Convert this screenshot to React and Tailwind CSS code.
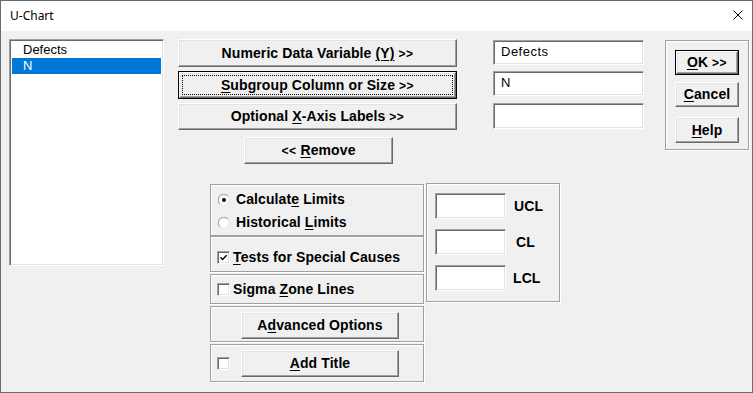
import React from "react";

const sunken =
  "bg-white border-t border-l border-b border-r border-t-[#a0a0a0] border-l-[#a0a0a0] border-b-white border-r-white shadow-[inset_1px_1px_0_#696969,inset_-1px_-1px_0_#e3e3e3]";
const raised =
  "bg-[#f0f0f0] border-t border-l border-b border-r border-t-white border-l-white border-b-[#696969] border-r-[#696969] shadow-[inset_-1px_-1px_0_#a0a0a0,inset_1px_1px_0_#e3e3e3]";
const frame =
  "border border-[#a0a0a0] shadow-[inset_1px_1px_0_#ffffff,1px_1px_0_#ffffff]";
const bold = "font-bold text-[14px] tracking-[0.1px]";

function U({ children }) {
  return <span className="underline underline-offset-[2px] decoration-1">{children}</span>;
}

function Arrows({ children }) {
  return <span className="text-[12px] tracking-[0.5px]">{children}</span>;
}

function Btn({ className = "", children, isDefault = false, focus = false }) {
  if (isDefault) {
    return (
      <div className={"border border-black flex " + className}>
        <div className={raised + " flex-1 flex p-[2px]"}>
          <div
            className={
              "flex-1 flex items-center justify-center " +
              (focus ? "border border-dotted border-black" : "")
            }
          >
            <span className={bold}>{children}</span>
          </div>
        </div>
      </div>
    );
  }
  return (
    <div className={raised + " flex items-center justify-center " + className}>
      <span className={bold}>{children}</span>
    </div>
  );
}

function Check({ checked }) {
  return (
    <div className={sunken + " w-[13px] h-[13px] shrink-0 flex items-center justify-center"}>
      {checked && (
        <svg width="9" height="9" viewBox="0 0 9 9">
          <path d="M1.5 4.2 L3.6 6.4 L7.6 2.2" fill="none" stroke="#000" strokeWidth="1.4" />
        </svg>
      )}
    </div>
  );
}

function Radio({ checked }) {
  return (
    <svg width="12" height="12" viewBox="0 0 12 12" className="shrink-0">
      <circle cx="6" cy="6" r="5.5" fill="#ffffff" stroke="#c8c8c8" />
      <path d="M1.8 9.8 A5.2 5.2 0 0 1 9.8 1.8" fill="none" stroke="#a0a0a0" strokeWidth="1" />
      <path d="M10.2 2.2 A5.2 5.2 0 0 1 2.2 10.2" fill="none" stroke="#f4f4f4" strokeWidth="1" />
      {checked && <circle cx="6" cy="6" r="2" fill="#000" />}
    </svg>
  );
}

function Field({ className = "", children }) {
  return (
    <div className={sunken + " flex items-center pl-[7px] pb-[1px] text-[13px] tracking-[0.5px] " + className}>
      {children}
    </div>
  );
}

export default function App() {
  return (
    <div className="w-[753px] h-[393px] border border-[#6b6b6b] flex flex-col bg-[#f0f0f0] text-black overflow-hidden font-['Liberation_Sans',Arial,sans-serif]">
      {/* Title bar */}
      <div className="h-[30px] bg-white flex items-center justify-between pl-[9px] pr-[10px] shrink-0">
        <span className="text-[12px] font-['Noto_Sans',sans-serif] pb-[1px]">U-Chart</span>
        <svg width="10" height="10" viewBox="0 0 10 10" className="mb-[3px] mr-[-1px]">
          <path d="M0.5 0.5 L9.5 9.5 M9.5 0.5 L0.5 9.5" stroke="#000" strokeWidth="1" />
        </svg>
      </div>

      {/* Body */}
      <div className="flex-1 flex pl-[8px] pt-[8px]">
        {/* Listbox */}
        <div className={sunken + " w-[155px] h-[227px] p-[2px] flex flex-col text-[13px]"}>
          <div className="h-[16px] pl-[11px] flex items-center">Defects</div>
          <div className="h-[16px] pl-[11px] flex items-center bg-[#0078d7] text-white">N</div>
        </div>

        <div className="ml-[14px] flex flex-col">
          {/* Top row */}
          <div className="flex items-start">
            <div className="w-[279px] flex flex-col">
              <Btn className="h-[28px]">
                Numeric Data Variable <U>(Y)</U> <Arrows>&gt;&gt;</Arrows>
              </Btn>
              <Btn className="h-[28px] mt-[4px]" isDefault focus>
                <U>S</U>ubgroup Column or Size <Arrows>&gt;&gt;</Arrows>
              </Btn>
              <Btn className="h-[27px] mt-[4px]">
                Optional <U>X</U>-Axis Labels <Arrows>&gt;&gt;</Arrows>
              </Btn>
              <Btn className="h-[27px] mt-[7px] ml-[66px] w-[149px]">
                <Arrows>&lt;&lt;</Arrows> <U>R</U>emove
              </Btn>
            </div>

            <div className="w-[151px] ml-[36px] mt-[1px] flex flex-col">
              <Field className="h-[25px]">Defects</Field>
              <Field className="h-[25px] mt-[6px]">N</Field>
              <Field className="h-[26px] mt-[7px]"></Field>
            </div>

            <div className={frame + " ml-[21px] mt-[1px] w-[84px] h-[110px] flex flex-col items-center pt-[9px]"}>
              <Btn className="w-[64px] h-[25px]" isDefault>
                <U>O</U>K <Arrows>&gt;&gt;</Arrows>
              </Btn>
              <Btn className="w-[64px] h-[25px] mt-[7px]">
                <U>C</U>ancel
              </Btn>
              <Btn className="w-[64px] h-[26px] mt-[10px]">
                <U>H</U>elp
              </Btn>
            </div>
          </div>

          {/* Lower section */}
          <div className="flex ml-[32px] mt-[20px] items-start">
            <div className="w-[214px] flex flex-col">
              <div className={frame + " h-[52px] flex flex-col pl-[7px] pt-[3px]"}>
                <div className="h-[23px] flex items-center gap-[6px]">
                  <Radio checked />
                  <span className={bold}>
                    Calculat<U>e</U> Limits
                  </span>
                </div>
                <div className="h-[23px] flex items-center gap-[6px]">
                  <Radio />
                  <span className={bold}>
                    Historical <U>L</U>imits
                  </span>
                </div>
              </div>
              <div className={frame + " h-[36px] flex items-center pl-[6px] pt-[6px] gap-[3px]"}>
                <Check checked />
                <span className={bold}>
                  <U>T</U>ests for Special Causes
                </span>
              </div>
              <div className={frame + " h-[30px] mt-[2px] flex items-center pl-[6px] pt-[1px] gap-[3px]"}>
                <Check />
                <span className={bold}>
                  Sigma <U>Z</U>one Lines
                </span>
              </div>
              <div className={frame + " h-[36px] mt-[2px] flex items-center pl-[30px] pt-[3px]"}>
                <Btn className="w-[158px] h-[27px]">
                  A<U>d</U>vanced Options
                </Btn>
              </div>
              <div className={frame + " h-[38px] mt-[2px] flex items-center pl-[6px] pt-[1px]"}>
                <Check />
                <Btn className="w-[158px] h-[27px] ml-[11px]">
                  <U>A</U>dd Title
                </Btn>
              </div>
            </div>

            <div className={frame + " ml-[2px] -mt-[1px] w-[134px] h-[119px] flex flex-col pl-[8px] pt-[9px]"}>
              <div className="flex items-center">
                <div className={sunken + " w-[71px] h-[26px]"}></div>
                <span className={bold + " ml-[8px]"}>UCL</span>
              </div>
              <div className="flex items-center mt-[10px]">
                <div className={sunken + " w-[71px] h-[26px]"}></div>
                <span className={bold + " ml-[10px]"}>CL</span>
              </div>
              <div className="flex items-center mt-[10px]">
                <div className={sunken + " w-[71px] h-[26px]"}></div>
                <span className={bold + " ml-[7px]"}>LCL</span>
              </div>
            </div>
          </div>
        </div>
      </div>
    </div>
  );
}
